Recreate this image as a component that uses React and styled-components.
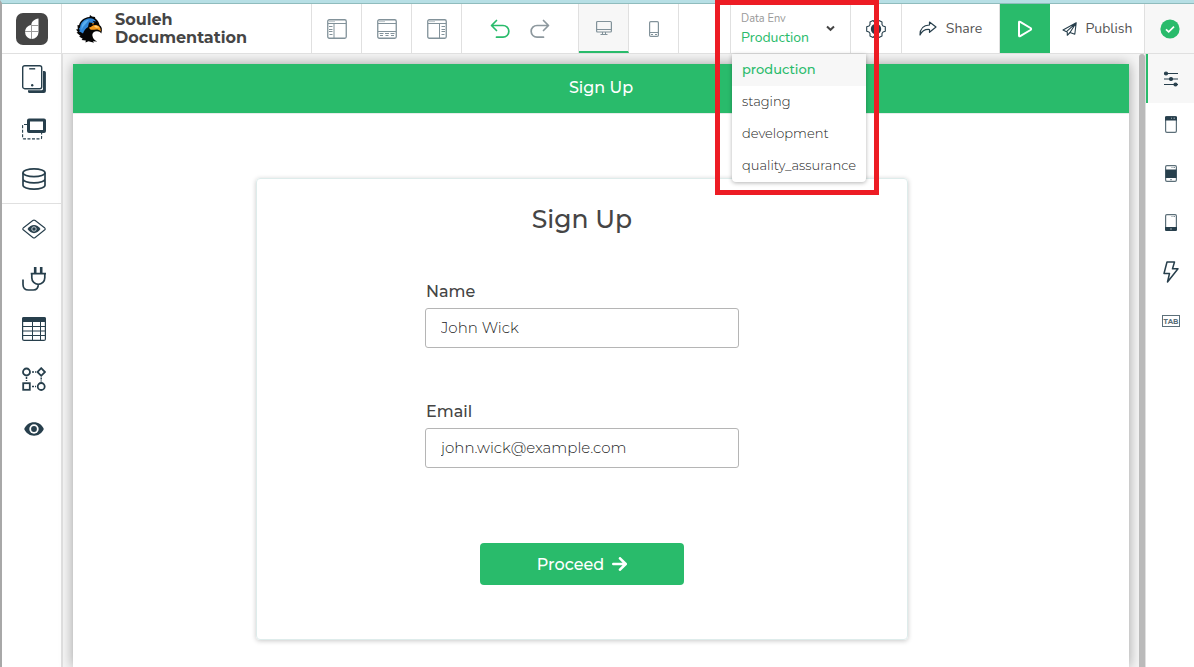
import React, { useState } from 'react';
import styled, { createGlobalStyle, css } from 'styled-components';

const green = '#29bb6b';
const ink = '#273f4c';
const line = '#e0e0e0';
const text = '#454545';
const barFont = "Nunito, Montserrat, 'Open Sans', sans-serif";

const GlobalStyle = createGlobalStyle`
  * {
    box-sizing: border-box;
  }

  body {
    margin: 0;
    font-family: Montserrat, Inter, 'Open Sans', sans-serif;
    font-size: 13px;
    color: ${text};
    background: #fff;
  }

  button,
  input {
    font-family: inherit;
    color: inherit;
  }

  svg {
    display: block;
    flex: none;
  }
`;

const Shell = styled.div`
  display: flex;
  flex-direction: column;
  height: 100vh;
  border-left: 2px solid #a8a8a8;
  border-top: 3px solid #b7dfe5;
`;

const TopBar = styled.header`
  display: flex;
  height: 51px;
  flex: none;
  border-top: 1px solid #8fbcbd;
  border-bottom: 1px solid ${line};
  font-family: ${barFont};
`;

const BarButton = styled.button`
  display: flex;
  align-items: center;
  justify-content: center;
  gap: ${({ $gap }) => $gap || 0}px;
  width: ${({ $width }) => $width || 50}px;
  flex: none;
  padding: 0;
  border: 0;
  border-right: 1px solid ${line};
  background: #fff;
  color: #555;
  font-size: 14px;
  cursor: pointer;

  ${({ $active }) =>
    $active &&
    css`
      background: #f7f7f7;
      border-bottom: 2px solid ${green};
    `}
`;

const RunButton = styled(BarButton)`
  background: ${green};
  border-right: 0;
`;

const StatusButton = styled(BarButton)`
  background: #f7f7f7;
  border-right: 0;
`;

const LogoLink = styled.a`
  display: flex;
  align-items: center;
  justify-content: center;
  width: 60px;
  flex: none;
  border-right: 1px solid ${line};
`;

const Project = styled.div`
  display: flex;
  align-items: center;
  gap: 12px;
  width: 250px;
  padding-left: 13px;
  flex: none;
  border-right: 1px solid ${line};
`;

const ProjectName = styled.h1`
  margin: 0;
  font-family: Montserrat, Inter, 'Open Sans', sans-serif;
  font-size: 16px;
  line-height: 18px;
  font-weight: 700;
`;

const History = styled.div`
  display: flex;
  align-items: center;
  justify-content: center;
  gap: 20px;
  width: 117px;
  flex: none;
  border-right: 1px solid ${line};
`;

const HistoryButton = styled.button`
  padding: 0;
  border: 0;
  background: none;
  cursor: pointer;
`;

const Spacer = styled.div`
  flex: 1;
  border-right: 1px solid ${line};
`;

const EnvPicker = styled.div`
  position: relative;
  z-index: 2;
  width: 120px;
  flex: none;
  display: flex;
`;

const EnvButton = styled.button`
  display: flex;
  align-items: center;
  justify-content: space-between;
  flex: 1;
  padding: 0 15px 0 10px;
  border: 0;
  border-right: 1px solid ${line};
  background: #fff;
  text-align: left;
  cursor: pointer;
`;

const EnvLabel = styled.span`
  display: block;
  font-size: 11px;
  line-height: 18px;
  color: #999;
`;

const EnvValue = styled.span`
  display: block;
  font-size: 14px;
  line-height: 20px;
  color: ${green};
`;

const EnvMenu = styled.ul`
  position: absolute;
  top: 50px;
  left: 1px;
  margin: 0;
  padding: 0;
  list-style: none;
  background: #fff;
  border-radius: 0 0 4px 4px;
  box-shadow: 0 1px 4px rgba(0, 0, 0, 0.3);
`;

const EnvOption = styled.button`
  display: block;
  width: 100%;
  height: 32px;
  padding: 0 10px 2px;
  border: 0;
  font-family: Montserrat, Inter, 'Open Sans', sans-serif;
  font-size: 13px;
  text-align: left;
  cursor: pointer;
  background: ${({ $selected }) => ($selected ? '#f7f7f7' : 'transparent')};
  color: ${({ $selected }) => ($selected ? green : '#222')};
  font-weight: ${({ $selected }) => ($selected ? 500 : 300)};
`;

const Highlight = styled.div`
  position: absolute;
  top: -4px;
  left: -16px;
  width: 164px;
  height: 195px;
  border: 5px solid #ed1c24;
  pointer-events: none;
`;

const Workspace = styled.div`
  display: flex;
  flex: 1;
  min-height: 0;
  overflow: hidden;
`;

const LeftRail = styled.nav`
  width: 61px;
  flex: none;
  border-right: 2px solid ${line};
`;

const RailGroup = styled.div`
  display: flex;
  flex-direction: column;

  & + & {
    margin-top: -1px;
    border-top: 1px solid ${line};
  }
`;

const RailButton = styled.button`
  display: flex;
  align-items: center;
  justify-content: center;
  height: 50px;
  padding: 0 0 0 4px;
  border: 0;
  background: none;
  cursor: pointer;
`;

const RightRail = styled.nav`
  display: flex;
  flex-direction: column;
  width: 49px;
  flex: none;
  border-left: 1px solid ${line};
`;

const PanelButton = styled.button`
  display: flex;
  align-items: center;
  justify-content: center;
  height: 49px;
  padding: 0 0 ${({ $active }) => ($active ? 0 : 6)}px;
  border: 0;
  border-left: 2px solid ${({ $active }) => ($active ? green : 'transparent')};
  background: ${({ $active }) => ($active ? '#f7f7f7' : 'none')};
  cursor: pointer;
`;

const Canvas = styled.div`
  display: flex;
  flex: 1;
  min-width: 0;
  padding: 10px 0 0 10px;
  background: #f5f5f5;
`;

const Scrollbar = styled.div`
  width: 6px;
  margin: -10px 0 0 10px;
  flex: none;
  border-radius: 3px 3px 0 0;
  background: #bababa;
`;

const Page = styled.main`
  flex: 1;
  min-width: 0;
  background: #fff;
  box-shadow: 0 0 12px rgba(0, 0, 0, 0.35);
`;

const PageHeader = styled.div`
  height: 50px;
  line-height: 47px;
  border-bottom: 1px solid #e6ecea;
  background: ${green};
  color: #fff;
  font-size: 16px;
  font-weight: 500;
  text-align: center;
`;

const FormArea = styled.div`
  padding: 64px 221px 28px 183px;
`;

const Card = styled.form`
  display: flex;
  flex-direction: column;
  align-items: center;
  height: 462px;
  padding: 24px 0;
  border: 1px solid #deeceb;
  border-radius: 4px;
  box-shadow: 0 1px 5px rgba(0, 0, 0, 0.22);
`;

const CardTitle = styled.h2`
  margin: 0 0 45px;
  font-size: 25px;
  line-height: 32px;
  font-weight: 500;
`;

const Field = styled.div`
  width: 100%;
  max-width: 314px;
  margin-bottom: 52px;
`;

const FieldLabel = styled.label`
  display: block;
  padding-left: 1px;
  margin-bottom: 4px;
  font-size: 16px;
  line-height: 24px;
  font-weight: 500;
`;

const FieldInput = styled.input`
  display: block;
  width: 100%;
  height: 40px;
  padding: 0 15px 2px;
  border: 1px solid #b5b5b5;
  border-radius: 3px;
  background: #fff;
  color: #222;
  font-size: 15px;
  font-weight: 300;
`;

const Proceed = styled.button`
  display: flex;
  align-items: center;
  justify-content: center;
  gap: 8px;
  width: 204px;
  height: 42px;
  margin-top: 23px;
  border: 0;
  border-radius: 4px;
  background: ${green};
  color: #fff;
  font-size: 16px;
  font-weight: 500;
  cursor: pointer;
`;

const Logo = () => (
  <svg width="32" height="32" viewBox="0 0 32 32">
    <rect width="32" height="32" rx="7" fill="#454545" />
    <path d="M22.500 5.500v13.700a6.700 6.700 0 0 1-13.400 0c0-4 2.600-6.700 6.200-7.200 .2-3.400 3-6 7.200-6.500z" fill="#fff" />
    <path d="M15.500 12v14M9 18.500h14M15 12.500h8" stroke="#9a9a9a" strokeWidth="1" fill="none" />
  </svg>
);

const Eagle = () => (
  <svg width="28" height="28" viewBox="0 0 28 28">
    <path
      d="M15 0l2 1.500 3 .5 .3 1.500C22.500 5 24 7 24.500 10c2.500 1.500 3 4.500 1.800 8.500-1-1.500-2.300-2.300-4-2.300-3.500 0-5.300 2-4.800 4.800 .4 2.500 2 4.500 4.800 5.500l-4.300-.3 1 1.600-5.500-1.500-3 1.200 .3-2-4.300-.5 1.200-1.300-3.700-2.200 1.500-.5L1.500 17.500 3 17 1 14.500l1.800-.3L2.500 10l1.500 .3C5 6 8.500 2.500 14.500 2z"
      fill="#050505"
    />
    <path
      d="M15 3.200c3 0 5 1.300 6 3.300l-3.500-.8 2 2.300-5.500-.5-1 4.500c-2.500 1.500-4 3.500-5 6.500L5.500 17 4 16.500l1-1.500-1.300-1L5 12.500C5.500 7.500 9 3.500 15 3.200z"
      fill="#2f86d8"
    />
    <path d="M6.500 12C7 8 9.500 5.300 14 4.700L11.500 8 8 12l-1.500 3z" fill="#58adf0" />
    <path
      d="M14 12.500c3-.5 3.500-2.500 6-2.500 3.500 0 6 2 5.800 6.500-1.300-1.500-2.800-2-4.500-2-2.500 0-4.500 .8-6.300-.3z"
      fill="#f59a1c"
    />
    <path d="M19 11.200c1.800-.8 3.500-.5 5 1.200l-3 .3z" fill="#ffd27a" />
    <circle cx="18" cy="8.800" r=".8" fill="#f59a1c" />
  </svg>
);

/* Browser frame with a docked panel on one side */
const FrameIcon = ({ side }) => (
  <svg width="20" height="20" viewBox="0 0 20 20" fill="none" stroke="#82929a">
    <rect x=".75" y=".75" width="18.500" height="18.500" rx="1.500" strokeWidth="1.300" />
    <path d="M1 4.500h18" />
    <path d="M2.500 2.600h1M4.500 2.600h1M6.500 2.600h1" />
    {side === 'left' && <path d="M7 4.500V19M2 7.500h3.500M2 10.500h3.500M2 12.500h3.500M2.500 15.500h3" />}
    {side === 'right' && <path d="M12.500 4.500V19M14.500 7.500h3.500M14.500 10.500h3.500M14.500 12.500h3.500M14.500 15.500h3" />}
    {side === 'bottom' && (
      <path d="M1 12.500h18M2.500 14.500h4M8 14.500h4M13.500 14.500h4M3 16.500h3M8.500 16.500h3M14 16.500h3" />
    )}
  </svg>
);

const UndoIcon = ({ flip, color }) => (
  <svg
    width="20"
    height="20"
    viewBox="0 0 20 20"
    fill="none"
    stroke={color}
    strokeWidth="1.700"
    strokeLinecap="round"
    strokeLinejoin="round"
  >
    {flip ? (
      <path d="M13.500 1.500l5 5-5 5M18 6.500H7A5.800 5.800 0 0 0 7 18.200h6.500" />
    ) : (
      <path d="M6.500 1.500l-5 5 5 5M2 6.500h11a5.800 5.800 0 0 1 0 11.700H6.500" />
    )}
  </svg>
);

const DesktopIcon = () => (
  <svg width="16" height="16" viewBox="0 0 16 16" fill="none" stroke="#82929a">
    <rect x=".6" y="1.500" width="14.800" height="10.500" rx="1" strokeWidth="1.200" />
    <path d="M1 9.500h14M6.500 12v2M9.500 12v2M4.500 14.500h7" />
  </svg>
);

const MobileIcon = () => (
  <svg width="10" height="16" viewBox="0 0 10 16" fill="none" stroke="#82929a">
    <rect x=".6" y=".6" width="8.800" height="14.800" rx="1.200" strokeWidth="1.200" />
    <path d="M1 11.500h8M2 13.500h2M6 13.500h2" />
  </svg>
);

const ChevronIcon = () => (
  <svg width="9" height="7" viewBox="0 0 9 7" fill="none" stroke="#454545" strokeWidth="2">
    <path d="M1 1.500l3.500 3.300L8 1.500" />
  </svg>
);

const GearIcon = () => (
  <svg width="20" height="20" viewBox="0 0 20 20" fill="none" stroke={ink}>
    <path
      d="M7 1.500L8.500 3h3L13 1.500l3 1.500v2.500l1 1.500 2.300.8v4.400L17 13l-1 1.500V17l-3 1.500-1.500-1.500h-3L7 18.500 4 17v-2.500L3 13l-2.300-.8V7.800L3 7l1-1.500V3z"
      strokeWidth="1.100"
      strokeLinejoin="round"
    />
    <circle cx="10" cy="10" r="5.200" fill={ink} stroke="none" />
  </svg>
);

const ShareIcon = () => (
  <svg width="18" height="15" viewBox="0 0 18 15" fill="none" stroke={ink} strokeWidth="1.200" strokeLinejoin="round">
    <path d="M10.500 1l6.500 5-6.500 5.300V8.500C6 8 3 10 1 14 1 8 4.500 4.200 10.500 4z" />
  </svg>
);

const PlayIcon = () => (
  <svg width="16" height="18" viewBox="0 0 16 18" fill="none" stroke="#fff" strokeWidth="2" strokeLinejoin="round">
    <path d="M2 2.500Q2 1.300 3.200 1.900L13.500 8Q14.800 9 13.500 10L3.200 16.100Q2 16.700 2 15.500z" />
  </svg>
);

const PublishIcon = () => (
  <svg width="15" height="14" viewBox="0 0 15 14" fill="none" stroke={ink} strokeWidth="1.100" strokeLinejoin="round">
    <path d="M14.200 .8L1 8l3.500 1.700zM14.200 .8L12.800 12.200 8 10.500zM5.300 9.800v3.500L8 10.500" />
  </svg>
);

const CheckIcon = () => (
  <svg width="20" height="20" viewBox="0 0 20 20">
    <circle cx="10" cy="10" r="9.600" fill={green} />
    <path d="M6 10.300l2.700 2.600L14 7.600" fill="none" stroke="#fff" strokeWidth="1.700" />
  </svg>
);

const PagesIcon = () => (
  <svg width="24" height="28" viewBox="0 0 24 28" fill="none">
    <path d="M21 6h1.200A1.600 1.600 0 0 1 23.900 7.600V26a2 2 0 0 1-2 2H7.600A1.600 1.600 0 0 1 6 26.400V25.300h13.500a1.500 1.500 0 0 0 1.500-1.500z" fill={ink} />
    <rect x=".7" y=".7" width="19" height="23" rx="2" fill="#fff" stroke={ink} strokeWidth="1.400" />
    <path d="M7.200 3.800h6" stroke={ink} strokeWidth="1.400" />
    <circle cx="10.200" cy="20.200" r="1.200" fill={ink} />
  </svg>
);

const LayersIcon = () => (
  <svg width="24" height="22" viewBox="0 0 24 22" fill="none" stroke={ink}>
    <rect x="6.500" y="2" width="16" height="11.500" rx=".5" strokeWidth="3" />
    <path d="M5 6.500H1.600a1 1 0 0 0-1 1v12.400a1 1 0 0 0 1 1h17a1 1 0 0 0 1-1V15" strokeDasharray="3 1.500" strokeWidth="1.100" />
  </svg>
);

const DatabaseIcon = () => (
  <svg width="24" height="22" viewBox="0 0 24 22" fill="none" stroke={ink} strokeWidth="1.700">
    <ellipse cx="12" cy="4.800" rx="11" ry="3.900" />
    <path d="M1 4.800v12.400c0 2.200 5 3.900 11 3.900s11-1.700 11-3.900V4.800M1 11c0 2.200 5 3.900 11 3.900S23 13.200 23 11" />
  </svg>
);

const DiamondEyeIcon = () => (
  <svg width="24" height="20" viewBox="0 0 24 20" fill="none" stroke={ink}>
    <path d="M13.200 1.500l9.600 7.500q.9 1 0 1.800l-9.600 7.700q-1.200 .8-2.400 0L1.200 10.800Q.3 10 1.200 9l9.600-7.500q1.200-.8 2.400 0z" strokeWidth="1.100" />
    <path d="M5.500 10C9 4.500 15 4.500 18.500 10 15 15.500 9 15.500 5.500 10z" fill={ink} stroke="none" />
    <circle cx="12" cy="10" r="2.200" stroke="#c5ccd0" strokeWidth="1" />
  </svg>
);

const PlugIcon = () => (
  <svg width="24" height="24" viewBox="0 0 24 24" fill="none" stroke={ink} strokeWidth="1.700">
    <path d="M13.200 0v6M19.200 0v6" strokeWidth="2.600" />
    <path d="M8.700 6.700h15.300M9.800 7v3.800a6.500 6.500 0 0 0 13 0V7M16.300 17.300c0 3.500-2 5.700-5 5.700H6.500C3 23 1 21 1 17.500V12.500" />
  </svg>
);

const TableIcon = () => (
  <svg width="24" height="24" viewBox="0 0 24 24" fill="none" stroke={ink}>
    <rect x=".6" y=".6" width="22.800" height="22.800" rx="1.500" strokeWidth="1.200" />
    <path d="M0 5V2A2 2 0 0 1 2 0h20a2 2 0 0 1 2 2v3z" fill={ink} stroke="none" />
    <path d="M1 9.500h22M1 14h22M1 18.500h22M10.500 5v18.500M18.500 5v18.500" />
  </svg>
);

const FlowIcon = () => (
  <svg width="24" height="24" viewBox="0 0 24 24" fill="none" stroke={ink} strokeWidth="1.800">
    <circle cx="4.500" cy="5" r="3.500" />
    <path d="M19.200 1.200L23 5l-3.800 3.800L15.400 5z" />
    <rect x="1.200" y="16.200" width="6.600" height="6.600" />
    <circle cx="19.200" cy="19.500" r="3.500" />
    <path d="M10 5h2M13 5h1M4.500 10v2M4.500 13v1M10 19.500h2M13 19.500h1M19.200 10.500v2M19.200 13.500v1" strokeWidth="1.500" />
  </svg>
);

const EyeIcon = () => (
  <svg width="20" height="14" viewBox="0 0 20 14">
    <path d="M10 .3c4.500 0 8 2.700 9.800 6.700C18 11 14.500 13.700 10 13.700S2 11 .2 7C2 3 5.500 .3 10 .3z" fill={ink} />
    <circle cx="10" cy="7" r="4.700" fill="#fff" />
    <circle cx="10" cy="7" r="2.900" fill={ink} />
  </svg>
);

const SlidersIcon = () => (
  <svg width="16" height="16" viewBox="0 0 16 16" stroke={ink} strokeWidth="1.200">
    <path d="M1 2.500h14M1 8h14M1 13.500h14" />
    <circle cx="3" cy="2.500" r="1.500" fill={ink} />
    <circle cx="8" cy="8" r="1.500" fill={ink} />
    <circle cx="12.500" cy="13.500" r="1.500" fill={ink} />
  </svg>
);

const PhonePartIcon = ({ part }) => (
  <svg width="12" height="17" viewBox="0 0 12 17" fill="none" stroke="#5c6f79">
    <rect x=".6" y=".6" width="10.800" height="15.800" rx="1.300" strokeWidth="1.200" />
    {part === 'header' && <path d="M0 4.500V2A1.500 1.500 0 0 1 1.500 .2h9A1.500 1.500 0 0 1 12 2v2.500z" fill={ink} stroke="none" />}
    {part === 'header' && <path d="M6 2.200h1M8.500 2.200h1.500" stroke="#fff" strokeWidth=".6" />}
    {part === 'body' && <path d="M.5 4.500h11v8.500H.5z" fill={ink} stroke="none" />}
    {part === 'footer' && <path d="M0 13h12v2.500a1.500 1.500 0 0 1-1.500 1.500h-9A1.500 1.500 0 0 1 0 15.500z" fill={ink} stroke="none" />}
    {part === 'footer' && <path d="M5.300 15h1.400" stroke="#fff" strokeWidth=".8" />}
    {part !== 'header' && <path d="M6.500 2.500h1M8.500 2.500h1.500" strokeWidth=".8" />}
    {part === 'body' && <path d="M5 14.700h2" strokeWidth=".8" />}
  </svg>
);

const BoltIcon = () => (
  <svg width="16" height="22" viewBox="0 0 16 22" fill="none" stroke={ink} strokeWidth="1.500" strokeLinejoin="round">
    <path d="M4 1h7.500L9.500 7.800H15L4.500 21l2-8.500H1z" />
  </svg>
);

const TabIcon = () => (
  <svg width="18" height="12" viewBox="0 0 18 12">
    <rect x=".5" y=".5" width="17" height="11" fill="none" stroke="#5c6f79" />
    <text x="9" y="8.500" textAnchor="middle" fontSize="7" fontWeight="700" fill="#5c6f79">
      TAB
    </text>
  </svg>
);

const ArrowIcon = () => (
  <svg width="15" height="14" viewBox="0 0 15 14" fill="none" stroke="#fff" strokeWidth="2.600" strokeLinecap="round" strokeLinejoin="round">
    <path d="M1.300 7h12M8 1.300L13.700 7 8 12.700" />
  </svg>
);

const environments = ['production', 'staging', 'development', 'quality_assurance'];

const leftTools = [
  [
    { label: 'Pages', icon: <PagesIcon /> },
    { label: 'Layers', icon: <LayersIcon /> },
    { label: 'Database', icon: <DatabaseIcon /> },
  ],
  [
    { label: 'Views', icon: <DiamondEyeIcon /> },
    { label: 'Connectors', icon: <PlugIcon /> },
    { label: 'Tables', icon: <TableIcon /> },
    { label: 'Flows', icon: <FlowIcon /> },
    { label: 'Visibility', icon: <EyeIcon /> },
  ],
];

const panels = [
  { label: 'Properties', icon: <SlidersIcon /> },
  { label: 'Header', icon: <PhonePartIcon part="header" /> },
  { label: 'Body', icon: <PhonePartIcon part="body" /> },
  { label: 'Footer', icon: <PhonePartIcon part="footer" /> },
  { label: 'Actions', icon: <BoltIcon /> },
  { label: 'Tab order', icon: <TabIcon /> },
];

const DataEnv = () => {
  const [open, setOpen] = useState(true);
  const [env, setEnv] = useState('production');

  return (
    <EnvPicker>
      <EnvButton type="button" aria-expanded={open} onClick={() => setOpen(!open)}>
        <span>
          <EnvLabel>Data Env</EnvLabel>
          <EnvValue>{env.charAt(0).toUpperCase() + env.slice(1)}</EnvValue>
        </span>
        <ChevronIcon />
      </EnvButton>
      {open && (
        <EnvMenu>
          {environments.map(name => (
            <li key={name}>
              <EnvOption type="button" $selected={name === env} onClick={() => setEnv(name)}>
                {name}
              </EnvOption>
            </li>
          ))}
        </EnvMenu>
      )}
      <Highlight />
    </EnvPicker>
  );
};

const SignUpForm = () => (
  <Card onSubmit={evt => evt.preventDefault()}>
    <CardTitle>Sign Up</CardTitle>
    <Field>
      <FieldLabel htmlFor="name">Name</FieldLabel>
      <FieldInput id="name" type="text" defaultValue="John Wick" />
    </Field>
    <Field>
      <FieldLabel htmlFor="email">Email</FieldLabel>
      <FieldInput id="email" type="email" defaultValue="john.wick@example.com" />
    </Field>
    <Proceed type="submit">
      Proceed
      <ArrowIcon />
    </Proceed>
  </Card>
);

const App = () => {
  const [device, setDevice] = useState('desktop');
  const [panel, setPanel] = useState('Properties');

  return (
    <>
      <GlobalStyle />
      <Shell>
        <TopBar>
          <LogoLink href="#home" aria-label="Home">
            <Logo />
          </LogoLink>
          <Project>
            <Eagle />
            <ProjectName>
              Souleh
              <br />
              Documentation
            </ProjectName>
          </Project>
          {['left', 'bottom', 'right'].map(side => (
            <BarButton key={side} type="button" aria-label={`Toggle ${side} panel`}>
              <FrameIcon side={side} />
            </BarButton>
          ))}
          <History>
            <HistoryButton type="button" aria-label="Undo">
              <UndoIcon color={green} />
            </HistoryButton>
            <HistoryButton type="button" aria-label="Redo">
              <UndoIcon color="#8d989e" flip />
            </HistoryButton>
          </History>
          <BarButton
            type="button"
            aria-label="Desktop"
            $active={device === 'desktop'}
            onClick={() => setDevice('desktop')}
          >
            <DesktopIcon />
          </BarButton>
          <BarButton
            type="button"
            aria-label="Mobile"
            $active={device === 'mobile'}
            onClick={() => setDevice('mobile')}
          >
            <MobileIcon />
          </BarButton>
          <Spacer />
          <DataEnv />
          <BarButton type="button" aria-label="Settings" $width={51}>
            <GearIcon />
          </BarButton>
          <BarButton type="button" $width={98} $gap={9}>
            <ShareIcon />
            Share
          </BarButton>
          <RunButton type="button" aria-label="Run">
            <PlayIcon />
          </RunButton>
          <BarButton type="button" $width={95} $gap={9}>
            <PublishIcon />
            Publish
          </BarButton>
          <StatusButton type="button" aria-label="Saved" $width={49}>
            <CheckIcon />
          </StatusButton>
        </TopBar>
        <Workspace>
          <LeftRail>
            {leftTools.map((group, index) => (
              <RailGroup key={index}>
                {group.map(({ label, icon }) => (
                  <RailButton key={label} type="button" aria-label={label}>
                    {icon}
                  </RailButton>
                ))}
              </RailGroup>
            ))}
          </LeftRail>
          <Canvas>
            <Page>
              <PageHeader>Sign Up</PageHeader>
              <FormArea>
                <SignUpForm />
              </FormArea>
            </Page>
            <Scrollbar />
          </Canvas>
          <RightRail>
            {panels.map(({ label, icon }) => (
              <PanelButton
                key={label}
                type="button"
                aria-label={label}
                $active={label === panel}
                onClick={() => setPanel(label)}
              >
                {icon}
              </PanelButton>
            ))}
          </RightRail>
        </Workspace>
      </Shell>
    </>
  );
};

export default App;
